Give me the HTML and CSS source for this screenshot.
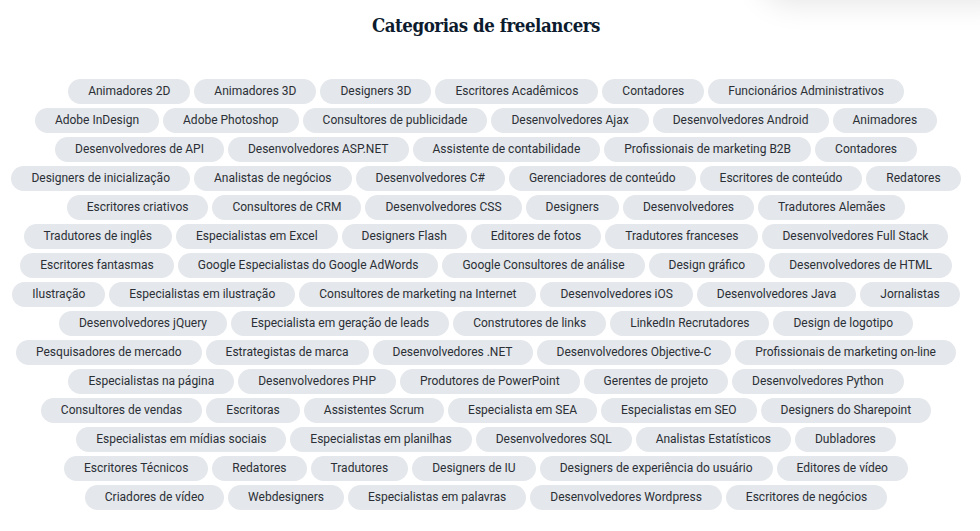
FILE: index.html
```html
<!DOCTYPE html>
<html lang="pt">
<head>
<meta charset="utf-8">
<title>Categorias de freelancers</title>
<link rel="stylesheet" href="styles.css">
</head>
<body>
<div class="top-shade"></div>
<section class="categories">
  <h2 class="categories-title">Categorias de freelancers</h2>
  <ul class="tag-list">
    <li class="tag">Animadores 2D</li>
    <li class="tag">Animadores 3D</li>
    <li class="tag">Designers 3D</li>
    <li class="tag">Escritores Acadêmicos</li>
    <li class="tag">Contadores</li>
    <li class="tag">Funcionários Administrativos</li>
    <li class="tag">Adobe InDesign</li>
    <li class="tag">Adobe Photoshop</li>
    <li class="tag">Consultores de publicidade</li>
    <li class="tag">Desenvolvedores Ajax</li>
    <li class="tag">Desenvolvedores Android</li>
    <li class="tag">Animadores</li>
    <li class="tag">Desenvolvedores de API</li>
    <li class="tag">Desenvolvedores ASP.NET</li>
    <li class="tag">Assistente de contabilidade</li>
    <li class="tag">Profissionais de marketing B2B</li>
    <li class="tag">Contadores</li>
    <li class="tag">Designers de inicialização</li>
    <li class="tag">Analistas de negócios</li>
    <li class="tag">Desenvolvedores C#</li>
    <li class="tag">Gerenciadores de conteúdo</li>
    <li class="tag">Escritores de conteúdo</li>
    <li class="tag">Redatores</li>
    <li class="tag">Escritores criativos</li>
    <li class="tag">Consultores de CRM</li>
    <li class="tag">Desenvolvedores CSS</li>
    <li class="tag">Designers</li>
    <li class="tag">Desenvolvedores</li>
    <li class="tag">Tradutores Alemães</li>
    <li class="tag">Tradutores de inglês</li>
    <li class="tag">Especialistas em Excel</li>
    <li class="tag">Designers Flash</li>
    <li class="tag">Editores de fotos</li>
    <li class="tag">Tradutores franceses</li>
    <li class="tag">Desenvolvedores Full Stack</li>
    <li class="tag">Escritores fantasmas</li>
    <li class="tag">Google Especialistas do Google AdWords</li>
    <li class="tag">Google Consultores de análise</li>
    <li class="tag">Design gráfico</li>
    <li class="tag">Desenvolvedores de HTML</li>
    <li class="tag">Ilustração</li>
    <li class="tag">Especialistas em ilustração</li>
    <li class="tag">Consultores de marketing na Internet</li>
    <li class="tag">Desenvolvedores iOS</li>
    <li class="tag">Desenvolvedores Java</li>
    <li class="tag">Jornalistas</li>
    <li class="tag">Desenvolvedores jQuery</li>
    <li class="tag">Especialista em geração de leads</li>
    <li class="tag">Construtores de links</li>
    <li class="tag">LinkedIn Recrutadores</li>
    <li class="tag">Design de logotipo</li>
    <li class="tag">Pesquisadores de mercado</li>
    <li class="tag">Estrategistas de marca</li>
    <li class="tag">Desenvolvedores .NET</li>
    <li class="tag">Desenvolvedores Objective-C</li>
    <li class="tag">Profissionais de marketing on-line</li>
    <li class="tag">Especialistas na página</li>
    <li class="tag">Desenvolvedores PHP</li>
    <li class="tag">Produtores de PowerPoint</li>
    <li class="tag">Gerentes de projeto</li>
    <li class="tag">Desenvolvedores Python</li>
    <li class="tag">Consultores de vendas</li>
    <li class="tag">Escritoras</li>
    <li class="tag">Assistentes Scrum</li>
    <li class="tag">Especialista em SEA</li>
    <li class="tag">Especialistas em SEO</li>
    <li class="tag">Designers do Sharepoint</li>
    <li class="tag">Especialistas em mídias sociais</li>
    <li class="tag">Especialistas em planilhas</li>
    <li class="tag">Desenvolvedores SQL</li>
    <li class="tag">Analistas Estatísticos</li>
    <li class="tag">Dubladores</li>
    <li class="tag">Escritores Técnicos</li>
    <li class="tag">Redatores</li>
    <li class="tag">Tradutores</li>
    <li class="tag">Designers de IU</li>
    <li class="tag">Designers de experiência do usuário</li>
    <li class="tag">Editores de vídeo</li>
    <li class="tag">Criadores de vídeo</li>
    <li class="tag">Webdesigners</li>
    <li class="tag">Especialistas em palavras</li>
    <li class="tag">Desenvolvedores Wordpress</li>
    <li class="tag">Escritores de negócios</li>
  </ul>
</section>
</body>
</html>
```

FILE: styles.css
```css
html, body {
  margin: 0;
  padding: 0;
  background: #ffffff;
}

body {
  font-family: Roboto, "Noto Sans", sans-serif;
  color: #2b2f36;
  overflow: hidden;
  position: relative;
  height: 531px;
}

/* soft shadow of a floating header panel sitting just above the view */
.top-shade {
  position: absolute;
  top: -60px;
  right: -40px;
  width: 260px;
  height: 60px;
  background: #ffffff;
  box-shadow: 0 4px 30px rgba(0, 0, 0, 0.10);
  border-radius: 30px;
}

.categories {
  width: 950px;
  margin-left: 11px;
  padding-top: 13px;
}

.categories-title {
  margin: 0 0 40px;
  text-align: center;
  font-family: "DejaVu Serif", serif;
  font-stretch: condensed;
  font-weight: 700;
  font-size: 18.5px;
  line-height: 26px;
  color: #0d1b2e;
  letter-spacing: -0.45px;
}

.tag-list {
  list-style: none;
  margin: 0;
  padding: 0;
  display: flex;
  flex-wrap: wrap;
  justify-content: center;
  column-gap: 4px;
  row-gap: 4px;
}

.tag {
  background: #e4e7eb;
  border-radius: 13px;
  height: 25px;
  line-height: 25px;
  padding: 0 20px;
  font-size: 12px;
  white-space: nowrap;
}
```
